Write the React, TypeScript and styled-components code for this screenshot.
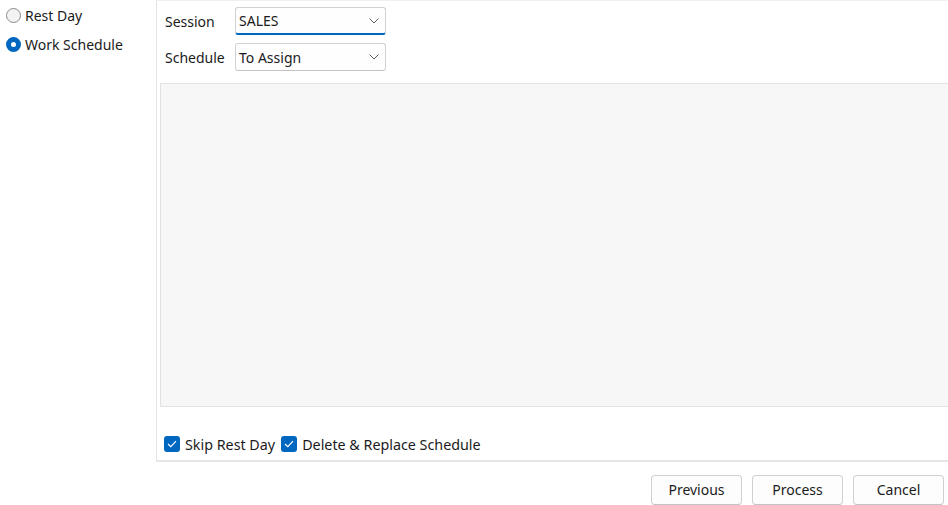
import styled, { createGlobalStyle } from 'styled-components';

const GlobalStyle = createGlobalStyle`
  html, body {
    margin: 0;
    padding: 0;
    background: #ffffff;
  }
  body {
    font-family: "Noto Sans", "Open Sans", sans-serif;
    font-size: 14px;
    color: #1b1b1b;
  }
`;

const Page = styled.div`
  width: 948px;
  height: 505px;
  display: flex;
  flex-direction: column;
  overflow: hidden;
`;

const Main = styled.div`
  display: flex;
  height: 462px;
`;

const Sidebar = styled.div`
  width: 156px;
  flex-shrink: 0;
  padding: 4px 0 0 6px;
  box-sizing: border-box;
  display: flex;
  flex-direction: column;
  gap: 7px;
`;

const RadioRow = styled.label`
  display: flex;
  align-items: center;
  gap: 4px;
  height: 22px;
`;

const RadioDot = styled.span<{ $checked?: boolean }>`
  width: 15px;
  height: 15px;
  border-radius: 50%;
  box-sizing: border-box;
  flex-shrink: 0;
  border: ${(p) => (p.$checked ? '5px solid #0067c0' : '1px solid #8a8a8a')};
  background: ${(p) => (p.$checked ? '#ffffff' : '#f3f3f3')};
`;

const Panel = styled.div`
  flex: 1;
  border-left: 1px solid #e3e3e3;
  border-top: 1px solid #f0f0f0;
  border-bottom: 2px solid #e6e6e6;
  box-sizing: border-box;
  display: flex;
  flex-direction: column;
  padding-left: 3px;
`;

const Form = styled.div`
  display: grid;
  grid-template-columns: 70px 151px;
  row-gap: 8px;
  align-items: center;
  padding: 6px 0 0 5px;
  height: 82px;
  box-sizing: border-box;
  align-content: start;
`;

const Label = styled.span`
  font-size: 14px;
`;

const Select = styled.div<{ $focused?: boolean }>`
  height: 28px;
  box-sizing: border-box;
  border: 1px solid #d1d1d1;
  border-bottom: ${(p) => (p.$focused ? '2px solid #0067c0' : '1px solid #c4c4c4')};
  border-radius: 3px;
  background: #fefefe;
  display: flex;
  align-items: center;
  justify-content: space-between;
  padding: 0 6px 0 3px;
  font-size: 14px;
`;

const Chevron = () => (
  <svg width="10" height="6" viewBox="0 0 10 6">
    <path d="M0.5 0.5 L5 5 L9.5 0.5" fill="none" stroke="#5c5c5c" strokeWidth="1" />
  </svg>
);

const Canvas = styled.div`
  height: 324px;
  background: #f7f7f7;
  border: 1px solid #e2e2e2;
  border-right: none;
  box-sizing: border-box;
`;

const Options = styled.div`
  flex: 1;
  display: flex;
  align-items: flex-end;
  gap: 6px;
  padding: 0 0 6px 4px;
`;

const CheckRow = styled.label`
  display: flex;
  align-items: center;
  gap: 5px;
  height: 20px;
  font-size: 14.3px;
`;

const CheckBox = styled.span`
  width: 16px;
  height: 16px;
  border-radius: 3px;
  background: #0067c0;
  display: flex;
  align-items: center;
  justify-content: center;
  flex-shrink: 0;
`;

const Tick = () => (
  <svg width="10" height="8" viewBox="0 0 10 8">
    <path d="M1 4 L3.8 6.6 L9 1.2" fill="none" stroke="#ffffff" strokeWidth="1.2" />
  </svg>
);

const Footer = styled.div`
  flex: 1;
  display: flex;
  justify-content: flex-end;
  align-items: flex-start;
  gap: 10px;
  padding: 13px 4px 0 0;
`;

const Button = styled.button`
  width: 91px;
  height: 30px;
  border: 1px solid #d0d0d0;
  border-bottom-color: #c2c2c2;
  border-radius: 4px;
  background: #fdfdfd;
  font-family: inherit;
  font-size: 14px;
  color: #1b1b1b;
  padding: 0 0 2px;
`;

export default function App() {
  return (
    <>
      <GlobalStyle />
      <Page>
        <Main>
          <Sidebar>
            <RadioRow>
              <RadioDot />
              Rest Day
            </RadioRow>
            <RadioRow>
              <RadioDot $checked />
              Work Schedule
            </RadioRow>
          </Sidebar>
          <Panel>
            <Form>
              <Label>Session</Label>
              <Select $focused>
                SALES
                <Chevron />
              </Select>
              <Label>Schedule</Label>
              <Select>
                To Assign
                <Chevron />
              </Select>
            </Form>
            <Canvas />
            <Options>
              <CheckRow>
                <CheckBox>
                  <Tick />
                </CheckBox>
                Skip Rest Day
              </CheckRow>
              <CheckRow>
                <CheckBox>
                  <Tick />
                </CheckBox>
                Delete &amp; Replace Schedule
              </CheckRow>
            </Options>
          </Panel>
        </Main>
        <Footer>
          <Button>Previous</Button>
          <Button>Process</Button>
          <Button>Cancel</Button>
        </Footer>
      </Page>
    </>
  );
}
